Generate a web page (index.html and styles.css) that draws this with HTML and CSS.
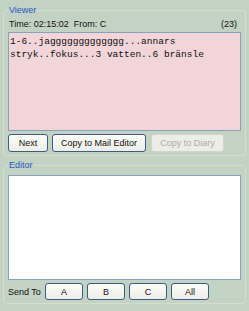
FILE: index.html
```html
<!DOCTYPE html>
<html>
<head>
<meta charset="utf-8">
<link rel="stylesheet" href="styles.css">
</head>
<body>
<div class="panel">
  <fieldset class="group viewer">
    <legend class="group-title">Viewer</legend>
    <div class="info-row">
      <span>Time: 02:15:02&nbsp; From: C</span>
      <span>(23)</span>
    </div>
    <div class="viewer-box">1-6..jaggggggggggggg...annars
stryk..fokus...3 vatten..6 bränsle</div>
    <div class="btn-row">
      <button class="btn btn-next">Next</button>
      <button class="btn btn-mail">Copy to Mail Editor</button>
      <button class="btn btn-diary" disabled>Copy to Diary</button>
    </div>
  </fieldset>
  <fieldset class="group editor">
    <legend class="group-title">Editor</legend>
    <div class="editor-box"></div>
    <div class="send-row">
      <span class="send-label">Send To</span>
      <button class="btn btn-send">A</button>
      <button class="btn btn-send">B</button>
      <button class="btn btn-send">C</button>
      <button class="btn btn-send">All</button>
    </div>
  </fieldset>
</div>
</body>
</html>
```
FILE: styles.css
```css
html, body {
  margin: 0;
  padding: 0;
}
body {
  width: 249px;
  height: 311px;
  background: #c3d3c3;
  font-family: "Liberation Sans", Arial, sans-serif;
  font-size: 9px;
  color: #101010;
  overflow: hidden;
}
.panel {
  padding: 0 3px;
  display: flex;
  flex-direction: column;
}
.group {
  margin: 0;
  border: 1px solid #d5ddd1;
  border-radius: 4px;
  padding: 0 4px 3px 4px;
  min-width: 0;
  display: flex;
  flex-direction: column;
}
.group-title {
  color: #2a58c8;
  padding: 0 1px;
  font-size: 9px;
  line-height: 11px;
}
.viewer {
  margin-top: 5px;
}
.info-row {
  display: flex;
  justify-content: space-between;
  margin-top: 3px;
  padding: 0 4px 0 1px;
  line-height: 11px;
}
.viewer-box {
  margin-top: 2px;
  height: 94px;
  background: #f1d5d8;
  border: 1px solid #86a2bc;
  padding: 3px 1px 0 1px;
  font-family: "Liberation Mono", "Courier New", monospace;
  font-size: 9.5px;
  line-height: 12.5px;
  white-space: pre;
  color: #101010;
}
.btn-row {
  display: flex;
  gap: 4px;
  margin-top: 3px;
}
.btn {
  font-family: "Liberation Sans", Arial, sans-serif;
  font-size: 9px;
  height: 18px;
  padding: 0;
  background: linear-gradient(#fbfbf8, #eeeee8);
  border: 1px solid #3c5c84;
  border-radius: 3px;
  color: #101010;
}
.btn-next { width: 40px; }
.btn-mail { width: 94px; }
.btn-diary {
  width: 73px;
  margin-left: 1px;
  color: #aaaea6;
  border-color: #cfd5c9;
  background: #ecede6;
}
.editor {
  margin-top: 4px;
}
.editor-box {
  margin-top: 4px;
  height: 103px;
  background: #ffffff;
  border: 1px solid #86a2bc;
}
.send-row {
  display: flex;
  align-items: center;
  gap: 4px;
  margin-top: 3px;
}
.send-label {
  width: 33px;
}
.btn-send {
  width: 38px;
  height: 17px;
}
```
